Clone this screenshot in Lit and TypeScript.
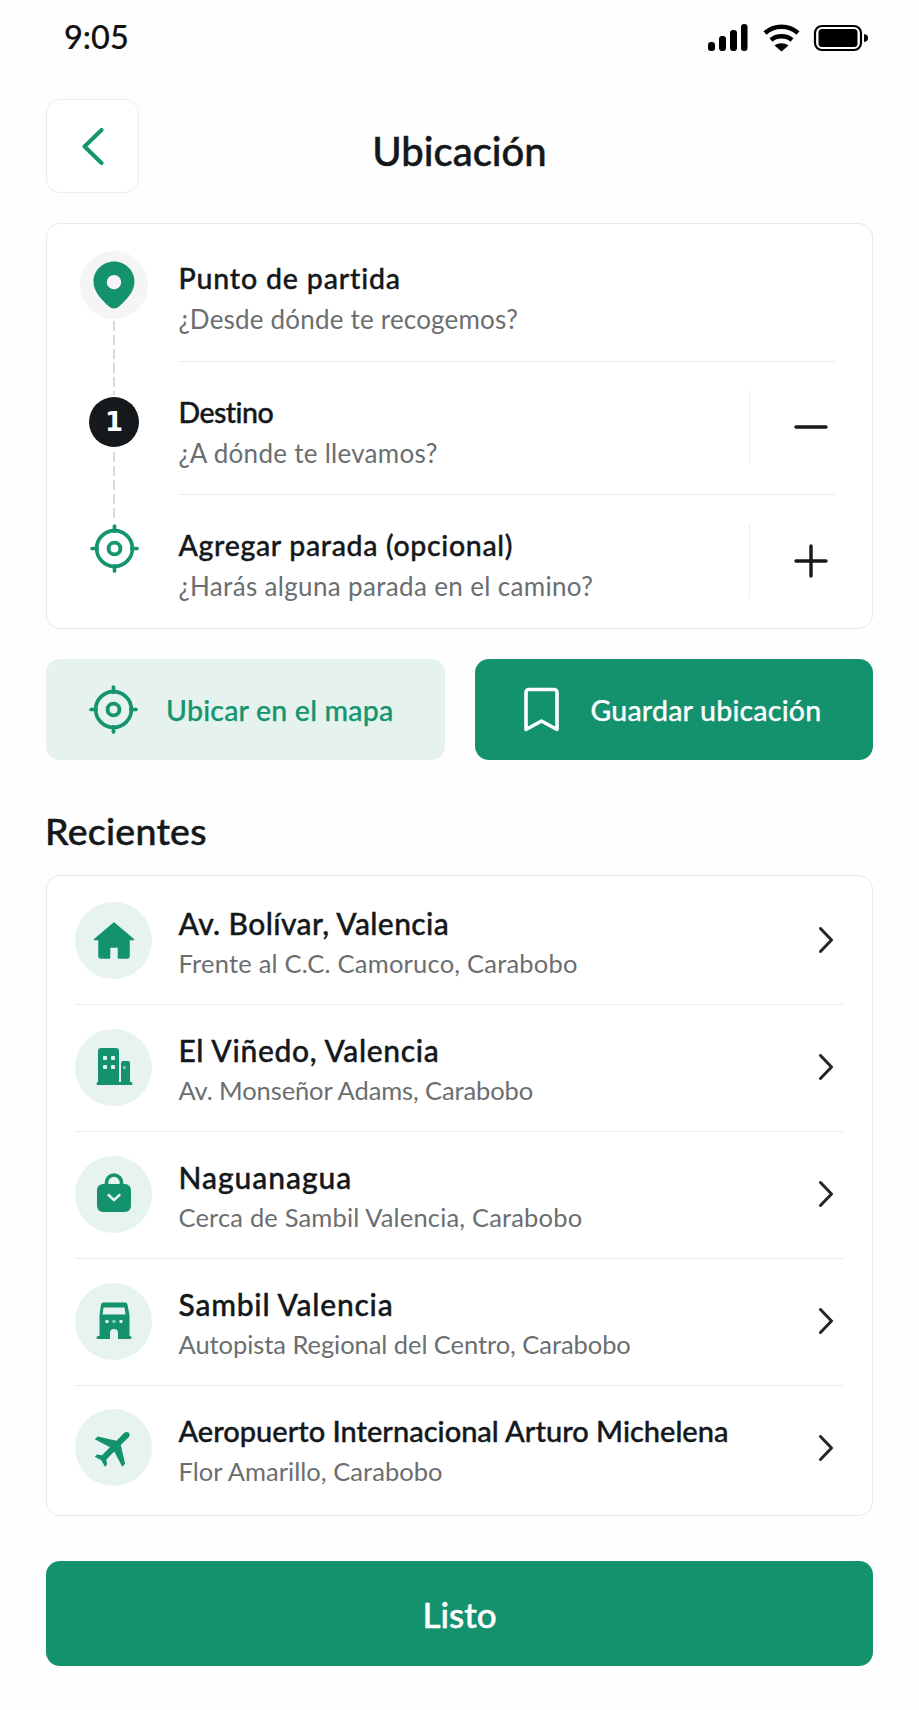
import { LitElement, html, css, svg } from "lit";
import { customElement } from "lit/decorators.js";

const target = html`<svg class="target" viewBox="0 0 48 48" width="49" height="49" fill="none" stroke="#14956f" stroke-linecap="round">
  <circle cx="24" cy="24" r="17.5" stroke-width="3.6"/>
  <circle cx="24" cy="24" r="5.8" stroke-width="3.8"/>
  <path d="M24 2v5M24 41v5M2 24h5M41 24h5" stroke-width="3.6"/>
</svg>`;

const chevron = html`<svg class="chev" viewBox="0 0 16 26" width="16" height="26" fill="none" stroke="#23272b" stroke-width="3" stroke-linecap="round" stroke-linejoin="round"><path d="M2.5 1.5 13.5 13 2.5 24.5"/></svg>`;

const G = "#14916d";
const L = "#e6f3ef";

const icons: Record<string, unknown> = {
  home: svg`<path fill="${G}" stroke="${G}" stroke-width="1.5" stroke-linejoin="round" d="M24 7 43.5 23.5H39V40a2 2 0 0 1-2 2H28.5V31h-9v11H11a2 2 0 0 1-2-2V23.5H4.5Z"/>`,
  building: svg`<path fill="${G}" d="M11 5h15a3 3 0 0 1 3 3v31h2V20a2 2 0 0 1 2-2h5a2 2 0 0 1 2 2v19h1a1.5 1.5 0 0 1 0 3H8a1.5 1.5 0 0 1 0-3V8a3 3 0 0 1 3-3Z"/>
    <g fill="${L}"><rect x="13" y="13" width="4" height="4" rx="1"/><rect x="21" y="13" width="4" height="4" rx="1"/><rect x="13" y="22" width="4" height="4" rx="1"/><rect x="21" y="22" width="4" height="4" rx="1"/><rect x="33" y="23" width="3" height="3" opacity=".5"/></g>`,
  bag: svg`<path fill="none" stroke="${G}" stroke-width="3.6" d="M16.5 16v-3.5a7.5 7.5 0 0 1 15 0V16"/>
    <rect x="7" y="14" width="34" height="28" rx="6" fill="${G}"/>
    <path fill="none" stroke="${L}" stroke-width="2.4" stroke-linecap="round" stroke-linejoin="round" d="M18.5 25 24 30l5.500-5"/>`,
  store: svg`<path fill="${G}" fill-rule="evenodd" d="M13 5.500h22a2.500 2.500 0 0 1 2.500 2.200L39.500 18v21H40a1.500 1.500 0 0 1 0 3H28V36a4 4 0 0 0-8 0v6H8a1.500 1.500 0 0 1 0-3h1.500V18L11 7.700A2.500 2.500 0 0 1 13 5.500ZM13.500 10.500 12.500 17.500h23l-1-7Z"/>
    <g fill="${L}"><circle cx="17" cy="24.500" r="1.700"/><circle cx="24" cy="24.500" r="1.700" opacity=".6"/><circle cx="31" cy="24.500" r="1.700"/></g>`,
  plane: svg`<g transform="translate(1 0) rotate(45 24 24) translate(-.5 -.5) scale(2.040)"><path fill="${G}" d="M21 16v-2l-8-5V3.500c0-.83-.67-1.500-1.500-1.500S10 2.670 10 3.500V9l-8 5v2l8-2.500V19l-2 1.500V22l3.500-1 3.500 1v-1.500L13 19v-5.500l8 2.500z"/></g>`,
};

const recents = [
  { i: "home", c: "fit-a", sc: "sub-a", t: "Av. Bolívar, Valencia", s: "Frente al C.C. Camoruco, Carabobo" },
  { i: "building", c: "fit-b", sc: "sub-b", t: "El Viñedo, Valencia", s: "Av. Monseñor Adams, Carabobo" },
  { i: "bag", c: "fit-c", sc: "sub-c", t: "Naguanagua", s: "Cerca de Sambil Valencia, Carabobo" },
  { i: "store", c: "fit-d", sc: "sub-d", t: "Sambil Valencia", s: "Autopista Regional del Centro, Carabobo" },
  { i: "plane", c: "fit-e", sc: "sub-e", t: "Aeropuerto Internacional Arturo Michelena", s: "Flor Amarillo, Carabobo" },
];

@customElement("app-root")
export class AppRoot extends LitElement {
  static styles = css`
    :host { display: block; width: 919px; height: 1710px; background: #fefefe; font-family: "Lato", "Liberation Sans", sans-serif; color: #14181b; overflow: hidden; }
    * { box-sizing: border-box; }
    .page { width: 827px; margin-left: 46px; }
    .status { height: 99px; display: flex; justify-content: space-between; align-items: flex-start; padding: 18px 4px 0 18px; }
    .time { font-size: 32.500px; line-height: 38px; font-weight: 500; color: #111; -webkit-text-stroke: .2px #111; }
    .status svg { display: block; margin-top: 6px; }
    .header { display: grid; grid-template-columns: 94px 1fr 94px; align-items: center; height: 94px; margin-bottom: 30px; }
    .back { width: 93px; height: 94px; border: 1.500px solid #ececec; border-radius: 14px; display: flex; align-items: center; justify-content: center; background: #fff; }
    h1 { margin: 0; text-align: center; font-size: 40px; font-weight: 500; line-height: 46px; padding-top: 9px; -webkit-text-stroke: .5px #14181b; }
    .card { border: 1.500px solid #e9e9e9; border-radius: 14px; background: #fff; }
    .route { height: 406px; display: flex; margin-bottom: 30px; }
    .rail { width: 68px; margin-left: 33px; margin-right: 30.500px; padding-top: 27px; display: flex; flex-direction: column; align-items: center; flex: none; }
    .halo { width: 68px; height: 68px; border-radius: 50%; background: #f4f5f4; display: flex; align-items: center; justify-content: center; flex: none; }
    .num { width: 50px; height: 50px; border-radius: 50%; background: #15191c; color: #fff; display: flex; align-items: center; justify-content: center; font-size: 26px; font-weight: 700; flex: none; font-family: "DejaVu Sans", sans-serif; }
    .dash { width: 2px; margin: 2px 0; flex: none; background: repeating-linear-gradient(#d9d9d9 0 10px, transparent 10px 14px); }
    .d1 { height: 74px; }
    .d2 { height: 70px; margin-top: 5px; }
    .target { display: block; flex: none; }
    .rows { flex: 1; padding-right: 37px; display: flex; flex-direction: column; min-width: 0; }
    .row { display: flex; align-items: center; border-bottom: 1.500px solid #ececec; }
    .row:last-child { border-bottom: 0; }
    .r1 { height: 138px; }
    .r2 { height: 133px; }
    .r3 { flex: 1; }
    .r1 .txt { padding-top: 12px; }
    .r2 .txt, .r3 .txt { padding-top: 9px; }
    .txt { flex: 1; min-width: 0; }
    .t { font-size: 28.500px; line-height: 40px; font-weight: 500; color: #14181b; white-space: nowrap; -webkit-text-stroke: .4px #14181b; }
    .s { font-size: 26px; line-height: 42px; letter-spacing: .28px; color: #6b6e70; white-space: nowrap; }
    .s.sub-desde { letter-spacing: .2px; }
    .s.sub-haras { letter-spacing: .34px; }
    .fit-punto { letter-spacing: .84px; }
    .fit-dest { letter-spacing: -.54px; }
    .fit-agr { letter-spacing: .66px; }
    .act { width: 86px; height: 74px; border-left: 1.500px solid #ececec; display: flex; align-items: center; justify-content: flex-end; padding-right: 7px; flex: none; margin-top: -2px; }
    .buttons { display: grid; grid-template-columns: 1fr 1fr; gap: 30px; margin-bottom: 48px; }
    .btn { height: 101px; border-radius: 14px; display: flex; align-items: center; font-size: 28.500px; letter-spacing: .2px; font-weight: 500; white-space: nowrap; }
    .b1 { background: #e5f2ee; color: #14956f; padding-left: 43px; gap: 28px; -webkit-text-stroke: .25px #14956f; }
    .b2 { background: #14916d; color: #fff; padding-left: 48px; gap: 31px; -webkit-text-stroke: .25px #fff; }
    h2 { margin: 0 0 21px -1px; font-size: 37.500px; line-height: 46px; letter-spacing: .25px; font-weight: 500; -webkit-text-stroke: .5px #14181b; }
    .recent { padding: 2px 28px 3px 28px; height: 641px; margin-bottom: 45px; }
    .item { height: 127px; display: flex; align-items: center; border-bottom: 1.500px solid #ececec; padding-bottom: 2px; }
    .item:last-child { border-bottom: 0; height: 128px; padding-bottom: 5px; }
    .item .txt { padding-top: 7px; }
    .item .t { font-size: 30px; }
    .item .t.fit-e { font-size: 29px; letter-spacing: 0; }
    .fit-a { letter-spacing: .4px; }
    .fit-b { letter-spacing: .67px; }
    .fit-c { letter-spacing: .97px; }
    .fit-d { letter-spacing: .77px; }
    .item .s { font-size: 25.500px; line-height: 41px; }
    .item .s.sub-a { letter-spacing: .21px; }
    .item .s.sub-b { letter-spacing: -.12px; }
    .item .s.sub-c { letter-spacing: .17px; }
    .item .s.sub-d { letter-spacing: -.06px; }
    .item .s.sub-e { letter-spacing: .04px; }
    .circle { width: 77px; height: 77px; border-radius: 50%; background: #e6f3ef; display: flex; align-items: center; justify-content: center; flex: none; margin-right: 26.500px; }
    .chev { flex: none; margin-right: 10px; }
    .done { height: 105px; border-radius: 14px; background: #14916d; color: #fff; display: flex; align-items: center; justify-content: center; font-size: 35px; font-weight: 500; -webkit-text-stroke: .5px #fff; }
  `;

  render() {
    return html`<div class="page">
      <div class="status">
        <div class="time">9:05</div>
        <svg width="165" height="30" viewBox="0 0 165 30">
          <g fill="#000"><rect x="4" y="18" width="7" height="9" rx="3"/><rect x="15" y="12" width="7" height="15" rx="3"/><rect x="26" y="6" width="7" height="21" rx="3"/><rect x="37" y="0" width="6.500" height="27" rx="3"/></g>
          <g fill="none" stroke="#000" stroke-linecap="butt"><path d="M61 9c9-8.500 24-8.500 33 0" stroke-width="4.500"/><path d="M67 16c5.500-5 15.500-5 21 0" stroke-width="4.500"/></g>
          <path d="M70.500 21.500c4-3 10-3 14 0l-7 6Z" fill="#000"/>
          <rect x="111" y="2" width="46" height="24" rx="7" fill="none" stroke="#000" stroke-width="2.200"/>
          <rect x="114.500" y="5" width="39" height="18" rx="3.500" fill="#000"/>
          <path d="M160 10c3 .3 4 2 4 4s-1 3.700-4 4Z" fill="#000"/>
        </svg>
      </div>
      <div class="header">
        <div class="back"><svg width="22" height="37" viewBox="0 0 22 37" fill="none" stroke="#14956f" stroke-width="4" stroke-linecap="round" stroke-linejoin="round"><path d="M19.500 2 2.500 18.500 19.500 35"/></svg></div>
        <h1>Ubicación</h1>
        <div></div>
      </div>

      <div class="card route">
        <div class="rail">
          <div class="halo"><svg width="42" height="48" viewBox="0 0 42 48"><path fill="#14916d" fill-rule="evenodd" d="M21 0.500C9.700.5.500 9.500.5 20.500c0 12 11 20.500 15.500 25 2.800 2.500 7.200 2.500 10 0 4.500-4.500 15.500-13 15.500-25C41.500 9.500 32.300.5 21 .5Zm0 13.500a7.200 7.200 0 1 1 0 14.400 7.200 7.200 0 0 1 0-14.400Z"/></svg></div>
          <div class="dash d1"></div>
          <div class="num">1</div>
          <div class="dash d2"></div>
          ${target}
        </div>
        <div class="rows">
          <div class="row r1"><div class="txt"><div class="t fit-punto">Punto de partida</div><div class="s sub-desde">¿Desde dónde te recogemos?</div></div></div>
          <div class="row r2"><div class="txt"><div class="t fit-dest">Destino</div><div class="s">¿A dónde te llevamos?</div></div>
            <div class="act"><svg width="34" height="34" viewBox="0 0 34 34" stroke="#15191c" stroke-width="3.400" stroke-linecap="round"><path d="M2 17h30"/></svg></div></div>
          <div class="row r3"><div class="txt"><div class="t fit-agr">Agregar parada (opcional)</div><div class="s sub-haras">¿Harás alguna parada en el camino?</div></div>
            <div class="act"><svg width="34" height="34" viewBox="0 0 34 34" stroke="#15191c" stroke-width="3.400" stroke-linecap="round"><path d="M2 17h30M17 2v30"/></svg></div></div>
        </div>
      </div>

      <div class="buttons">
        <div class="btn b1">${target}<span>Ubicar en el mapa</span></div>
        <div class="btn b2"><svg width="37" height="45" viewBox="0 0 37 45" fill="none" stroke="#fff" stroke-width="3.600" stroke-linejoin="round"><path d="M6 2.500h25a3 3 0 0 1 3 3v37L18.500 34 3 42.500v-37a3 3 0 0 1 3-3Z"/></svg><span>Guardar ubicación</span></div>
      </div>

      <h2>Recientes</h2>
      <div class="card recent">
        ${recents.map((r) => html`<div class="item">
          <div class="circle"><svg width="48" height="48" viewBox="0 0 48 48">${icons[r.i]}</svg></div>
          <div class="txt"><div class="t ${r.c}">${r.t}</div><div class="s ${r.sc}">${r.s}</div></div>
          ${chevron}
        </div>`)}
      </div>
      <div class="done">Listo</div>
    </div>`;
  }
}
